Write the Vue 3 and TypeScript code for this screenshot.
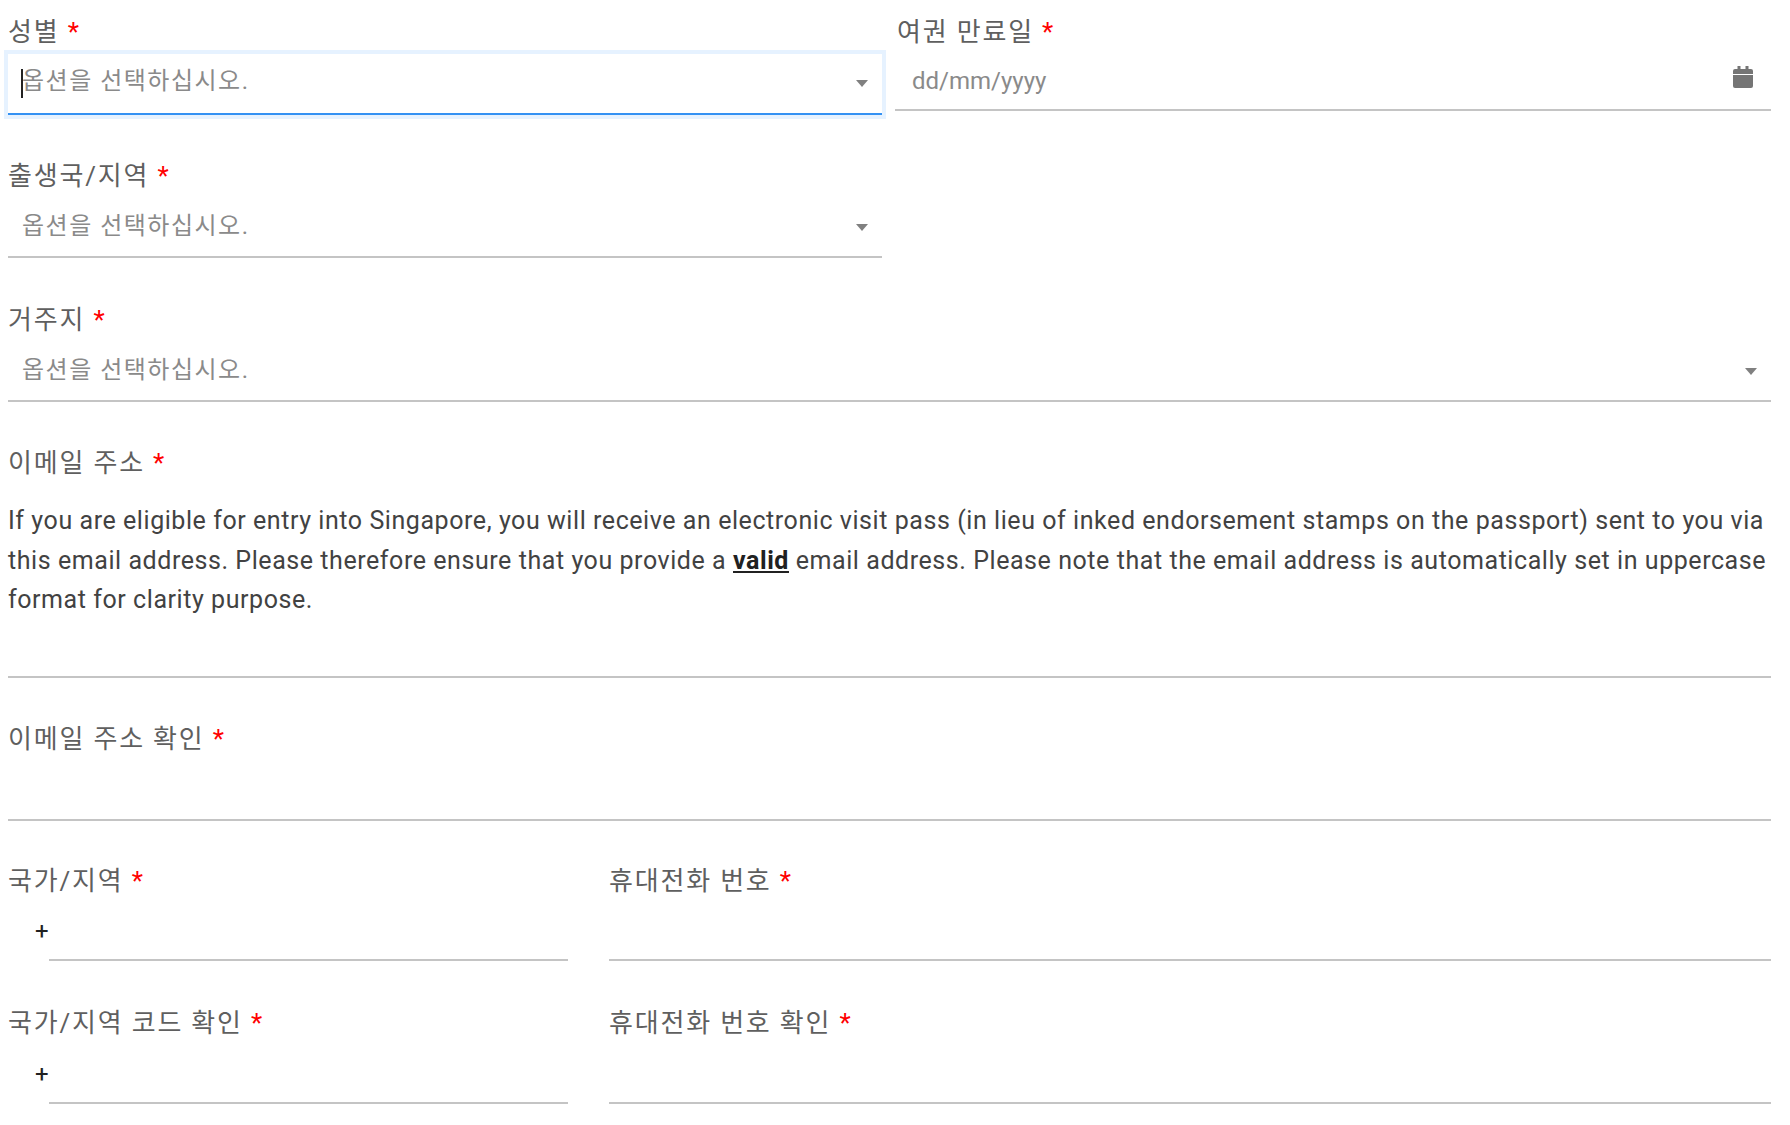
<template>
  <form class="form">
    <div class="row row-first">
      <div class="field half">
        <label class="label">성별 <span class="req">*</span></label>
        <div class="control focused">
          <span class="caret"></span>
          <span class="placeholder">옵션을 선택하십시오.</span>
          <span class="arrow"></span>
        </div>
      </div>
      <div class="field half-right">
        <label class="label">여권 만료일 <span class="req">*</span></label>
        <div class="control date">
          <span class="placeholder latin">dd/mm/yyyy</span>
          <svg class="calendar" viewBox="0 0 20 22" width="20" height="22">
            <path fill="#757575" d="M4.5 0h3v3h5V0h3v3H18a2 2 0 0 1 2 2v3H0V5a2 2 0 0 1 2-2h2.5z" />
            <path fill="#757575" d="M0 9h20v11a2 2 0 0 1-2 2H2a2 2 0 0 1-2-2z" />
          </svg>
        </div>
      </div>
    </div>

    <div class="row row-birth">
      <div class="field half">
        <label class="label">출생국/지역 <span class="req">*</span></label>
        <div class="control">
          <span class="placeholder">옵션을 선택하십시오.</span>
          <span class="arrow"></span>
        </div>
      </div>
    </div>

    <div class="field row-home">
      <label class="label">거주지 <span class="req">*</span></label>
      <div class="control">
        <span class="placeholder">옵션을 선택하십시오.</span>
        <span class="arrow"></span>
      </div>
    </div>

    <div class="field row-email">
      <label class="label">이메일 주소 <span class="req">*</span></label>
      <p class="hint">
        If you are eligible for entry into Singapore, you will receive an electronic visit pass (in lieu of inked endorsement stamps on the passport) sent to you via this email address. Please therefore ensure that you provide a <strong>valid</strong> email address. Please note that the email address is automatically set in uppercase format for clarity purpose.
      </p>
      <div class="control email-input"></div>
    </div>

    <div class="field row-confirm">
      <label class="label">이메일 주소 확인 <span class="req">*</span></label>
      <div class="control"></div>
    </div>

    <div v-for="pair in phoneRows" :key="pair.code" class="row phone-row" :class="pair.cls">
      <div class="field code-field">
        <label class="label">{{ pair.code }} <span class="req">*</span></label>
        <div class="code-wrap">
          <span class="plus">+</span>
          <div class="control"></div>
        </div>
      </div>
      <div class="field phone-field">
        <label class="label">{{ pair.phone }} <span class="req">*</span></label>
        <div class="control"></div>
      </div>
    </div>
  </form>
</template>

<script setup lang="ts">
interface PhoneRow {
  code: string
  phone: string
  cls: string
}

const phoneRows: PhoneRow[] = [
  { code: "국가/지역", phone: "휴대전화 번호", cls: "phone-a" },
  { code: "국가/지역 코드 확인", phone: "휴대전화 번호 확인", cls: "phone-b" },
]
</script>

<style>
html,
body {
  background: #fff;
}
</style>

<style scoped>
.form {
  box-sizing: border-box;
  width: 1790px;
  height: 1125px;
  padding: 0 19px 0 8px;
  overflow: hidden;
  font-family: Roboto, "Noto Sans CJK KR", sans-serif;
  color: #424242;
}

.row {
  display: flex;
}

.field {
  display: flex;
  flex-direction: column;
}

.half {
  width: 874px;
}

.half-right {
  width: 876px;
  margin-left: 13px;
}

.half-right .label {
  padding-left: 2px;
}

.label {
  display: block;
  flex-shrink: 0;
  height: 62px;
  box-sizing: border-box;
  padding-top: 14px;
  font-size: 26px;
  line-height: 36px;
  letter-spacing: 1.8px;
  color: #5f5f5f;
}

.req {
  color: #f00;
  letter-spacing: 0;
}

.control {
  position: relative;
  display: flex;
  flex-shrink: 0;
  align-items: flex-start;
  box-sizing: border-box;
  height: 52px;
  padding: 2px 14px 0;
  border-bottom: 2px solid #c4c4c4;
}

.focused {
  height: 61px;
  margin-top: -8px;
  padding-top: 9px;
  border-bottom: 2px solid #3391f3;
  box-shadow: 0 0 0 4px #e6f2ff;
}

.date {
  height: 49px;
  padding-top: 1px;
  padding-left: 17px;
}

.placeholder {
  font-size: 24px;
  letter-spacing: 1.5px;
  color: #8a8a8a;
  line-height: 36px;
}

.latin {
  letter-spacing: 0;
}

.caret {
  position: absolute;
  left: 13px;
  top: 15px;
  width: 2px;
  height: 29px;
  background: #222;
}

.arrow {
  position: absolute;
  right: 14px;
  top: 18px;
  border-left: 6.5px solid transparent;
  border-right: 6.5px solid transparent;
  border-top: 7px solid #808080;
}

.focused .arrow {
  top: 26px;
}

.calendar {
  position: absolute;
  right: 18px;
  top: 4px;
}

.hint {
  margin: 8px 0 0;
  font-size: 25px;
  line-height: 39.5px;
  letter-spacing: 0.56px;
  color: #424242;
}

.hint strong {
  font-weight: 700;
  text-decoration: underline;
  color: #212121;
}

.email-input {
  height: 58px;
}

.row-first {
  height: 111px;
}

.row-birth {
  margin-top: 33px;
}

.row-home {
  margin-top: 30px;
}

.row-email {
  margin-top: 29px;
}

.row-confirm {
  margin-top: 29px;
}

.phone-row {
  gap: 41px;
}

.phone-row .control {
  height: 50px;
}

.phone-a {
  margin-top: 28px;
}

.phone-b {
  margin-top: 30px;
}

.phone-b .control {
  height: 51px;
}

.code-field {
  width: 560px;
}

.phone-field {
  flex: 1;
}

.code-wrap {
  display: flex;
  align-items: flex-end;
}

.plus {
  width: 41px;
  height: 50px;
  box-sizing: border-box;
  padding-left: 27px;
  font-size: 24px;
  line-height: 40px;
  color: #212121;
}

.code-wrap .control {
  flex: 1;
}
</style>
